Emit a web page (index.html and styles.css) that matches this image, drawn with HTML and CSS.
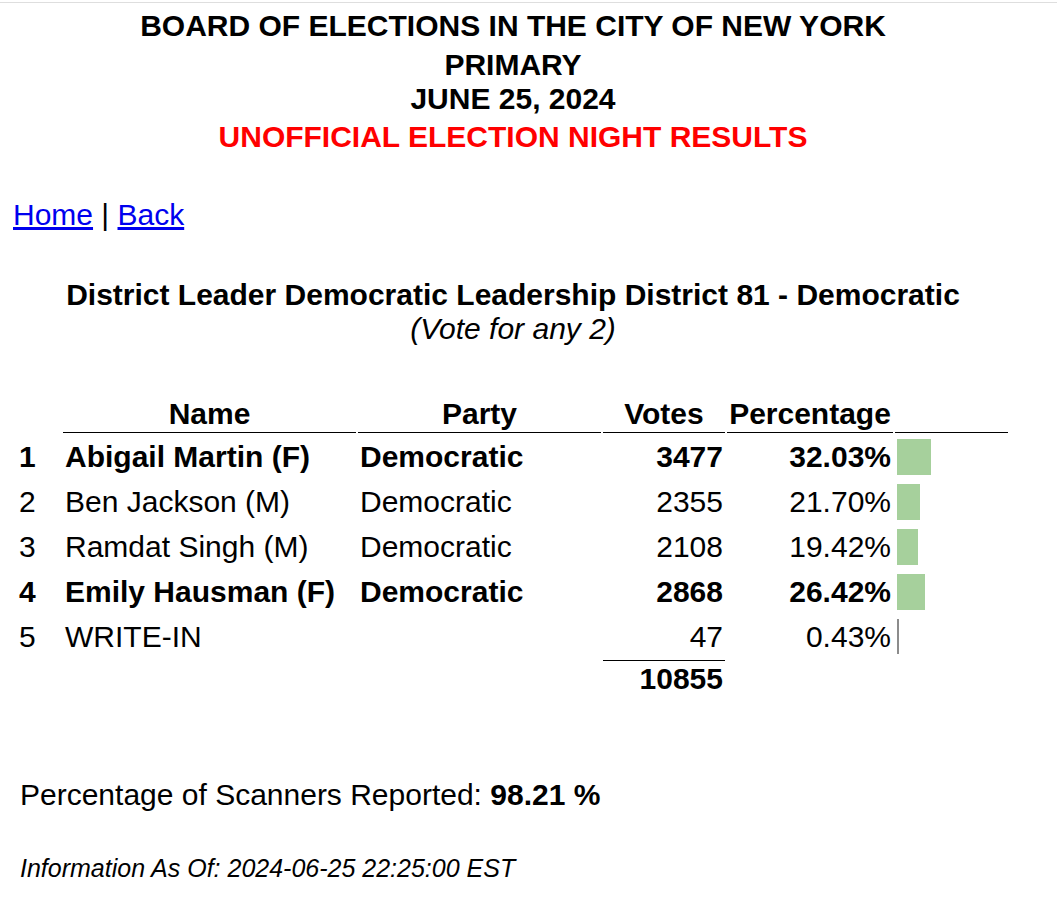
FILE: index.html
```html
<!DOCTYPE html>
<html lang="en">
<head>
  <meta charset="UTF-8">
  <title>District Leader Democratic Leadership District 81 - Democratic</title>
  <link rel="stylesheet" href="styles.css">
</head>
<body>
  <div class="page">
    <div class="masthead">
      <div class="board">BOARD OF ELECTIONS IN THE CITY OF NEW YORK</div>
      <div class="election">PRIMARY<br>JUNE 25, 2024</div>
      <div class="unofficial">UNOFFICIAL ELECTION NIGHT RESULTS</div>
    </div>

    <div class="nav"><a href="#">Home</a> | <a href="#">Back</a></div>

    <div class="contest">
      <div class="contest-title">District Leader Democratic Leadership District 81 - Democratic</div>
      <div class="contest-rule">(Vote for any 2)</div>
    </div>

    <table class="results">
      <colgroup>
        <col class="col-rank">
        <col class="col-name">
        <col class="col-party">
        <col class="col-votes">
        <col class="col-pct">
        <col class="col-bar">
      </colgroup>
      <thead>
        <tr>
          <th class="blank"></th>
          <th>Name</th>
          <th>Party</th>
          <th>Votes</th>
          <th>Percentage</th>
          <th></th>
        </tr>
      </thead>
      <tbody>
        <tr class="winner">
          <td class="rank">1</td>
          <td>Abigail Martin (F)</td>
          <td>Democratic</td>
          <td class="num">3477</td>
          <td class="num">32.03%</td>
          <td><div class="bar" style="width: 34px"></div></td>
        </tr>
        <tr>
          <td class="rank">2</td>
          <td>Ben Jackson (M)</td>
          <td>Democratic</td>
          <td class="num">2355</td>
          <td class="num">21.70%</td>
          <td><div class="bar" style="width: 23px"></div></td>
        </tr>
        <tr>
          <td class="rank">3</td>
          <td>Ramdat Singh (M)</td>
          <td>Democratic</td>
          <td class="num">2108</td>
          <td class="num">19.42%</td>
          <td><div class="bar" style="width: 20.6px"></div></td>
        </tr>
        <tr class="winner">
          <td class="rank">4</td>
          <td>Emily Hausman (F)</td>
          <td>Democratic</td>
          <td class="num">2868</td>
          <td class="num">26.42%</td>
          <td><div class="bar" style="width: 28px"></div></td>
        </tr>
        <tr>
          <td class="rank">5</td>
          <td>WRITE-IN</td>
          <td></td>
          <td class="num">47</td>
          <td class="num">0.43%</td>
          <td><div class="bar bar-tiny"></div></td>
        </tr>
        <tr class="total-row">
          <td></td>
          <td></td>
          <td></td>
          <td class="total">10855</td>
          <td></td>
          <td></td>
        </tr>
      </tbody>
    </table>

    <p class="scanners">Percentage of Scanners Reported: <b>98.21 %</b></p>
    <p class="asof">Information As Of: 2024-06-25 22:25:00 EST</p>
  </div>
</body>
</html>
```

FILE: styles.css
```css
html {
  background: #fff linear-gradient(#fff 2px, #dedede 2px, #dedede 3px, #fff 3px) no-repeat;
  background-size: 100% 3px;
}
body {
  margin: 8px;
  font-family: "Liberation Sans", Arial, sans-serif;
  font-size: 30px;
  color: #000;
}
.page {
  width: 1010px;
}
.masthead {
  padding-top: 1px;
  text-align: center;
  font-weight: bold;
  line-height: 34px;
}
.election {
  margin-top: 5px;
}
.unofficial {
  margin-top: 4px;
  color: #ff0000;
}
.nav {
  margin-top: 42.5px;
  padding-left: 5px;
  line-height: 35px;
}
.nav a {
  color: #0000ee;
}
.contest {
  margin-top: 46px;
  text-align: center;
  line-height: 34px;
}
.contest-title {
  font-weight: bold;
}
.contest-rule {
  font-style: italic;
}
.results {
  margin-top: 48.5px;
  width: 1002px;
  table-layout: fixed;
  border-spacing: 2px;
  line-height: 35px;
}
.col-rank { width: 51px; }
.col-name { width: 293px; }
.col-party { width: 243px; }
.col-votes { width: 122px; }
.col-pct { width: 166px; }
.col-bar { width: 113px; }
.results th {
  padding: 0 2px 1px;
  border-bottom: 1px solid #000;
  text-align: center;
  font-weight: bold;
}
.results th.blank {
  border-bottom: none;
}
.results td {
  height: 43px;
  padding: 0 2px;
  vertical-align: middle;
  white-space: nowrap;
}
.results td.rank {
  padding-left: 9px;
}
.results td.num {
  text-align: right;
}
.winner td {
  font-weight: bold;
}
.bar {
  height: 36px;
  background: #a6d09c;
}
.bar-tiny {
  width: 2px;
  height: 35px;
  background: #8c8c8c;
}
.results .total-row td {
  height: auto;
  vertical-align: top;
}
.results td.total {
  border-top: 1px solid #000;
  text-align: right;
  font-weight: bold;
}
.scanners {
  margin: 79px 0 0;
  padding-left: 12px;
  line-height: 35px;
}
.asof {
  margin: 42px 0 0;
  padding-left: 12px;
  font-size: 25px;
  font-style: italic;
}
```
